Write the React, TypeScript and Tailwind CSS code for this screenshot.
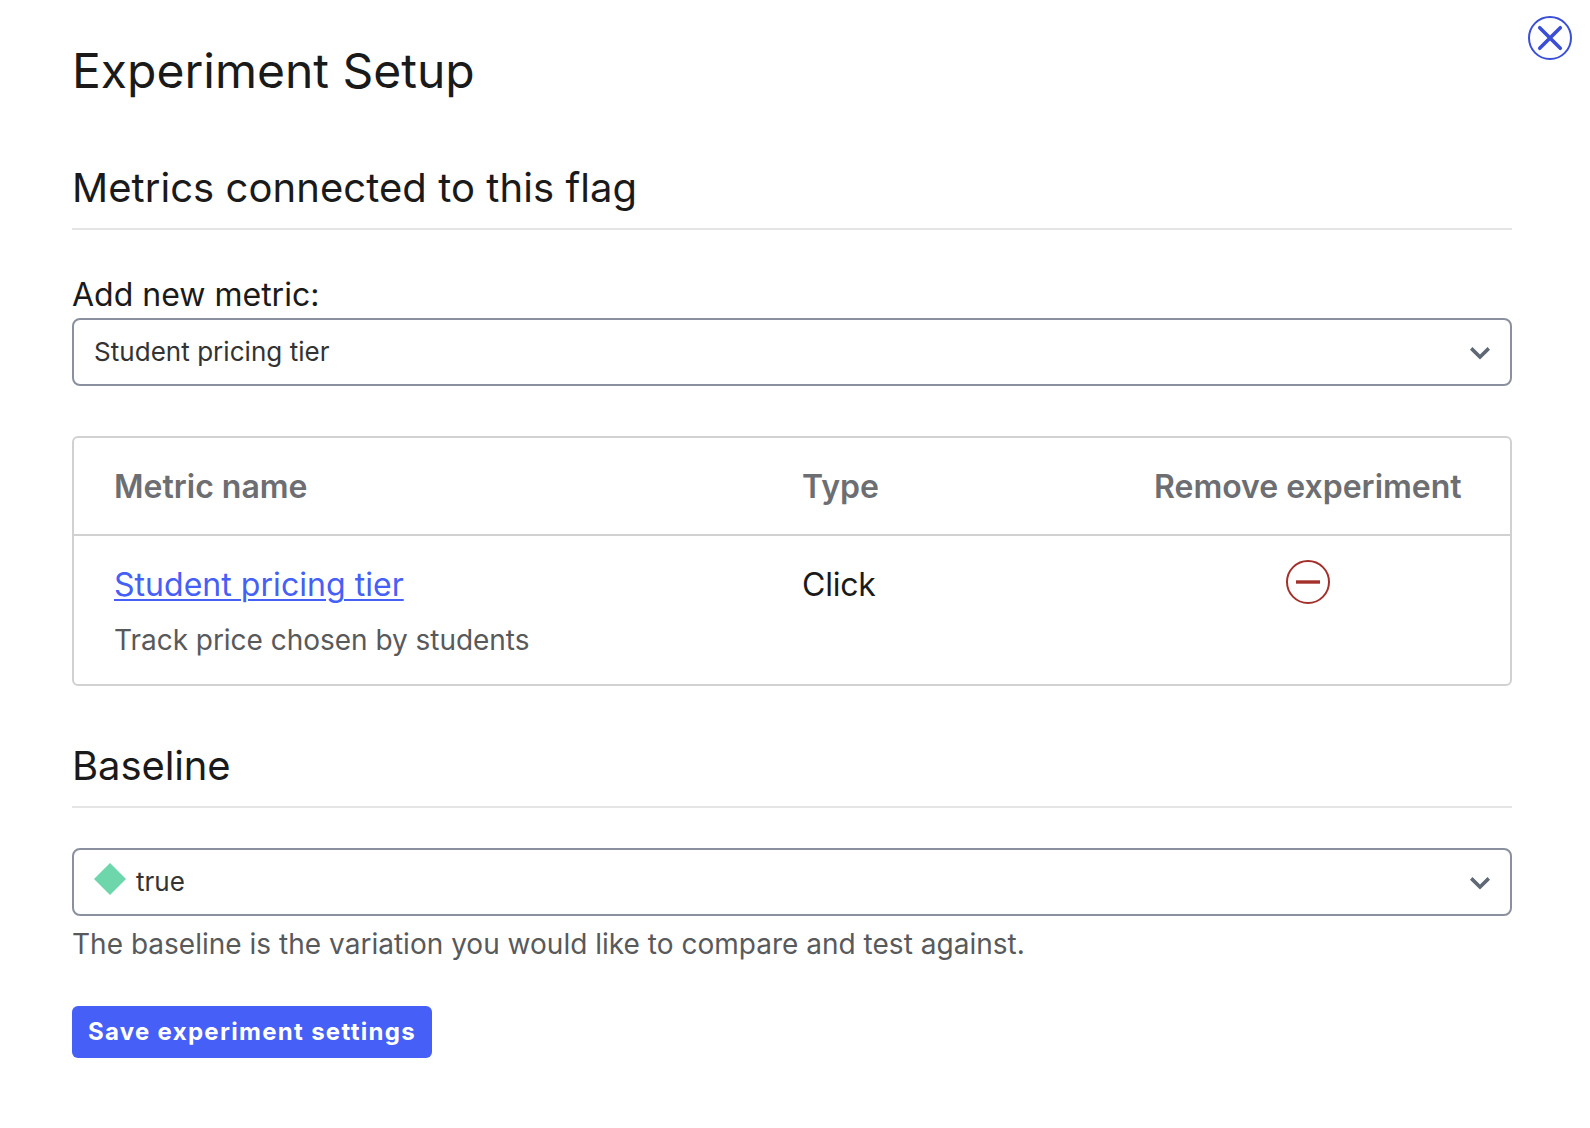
import React from "react";

function Chevron() {
  return (
    <svg className="mt-[2px]" width="20" height="14" viewBox="0 0 20 14" fill="none" stroke="#5f6875" strokeWidth="3.6">
      <path d="M1.2 2.4 L10 11 L18.8 2.4" />
    </svg>
  );
}

export default function App() {
  return (
    <div className="relative flex h-[1128px] w-[1590px] flex-col bg-white pl-[72px] pr-[78px] font-['Inter',sans-serif] text-[#1a1a1a]">
      <button aria-label="Close" className="absolute left-[1528px] top-[16px]">
        <svg width="44" height="44" viewBox="0 0 44 44" fill="none" stroke="#3a4fd6">
          <circle cx="22" cy="22" r="21" strokeWidth="2" />
          <path d="M11.7 11.7 L32.3 32.3 M32.3 11.7 L11.7 32.3" strokeWidth="3.6" strokeLinecap="round" />
        </svg>
      </button>
      <h1 className="mt-[41px] h-[60px] whitespace-nowrap text-[48px] leading-[60px]">Experiment Setup</h1>
      <h2 className="mt-[62px] h-[67px] whitespace-nowrap border-b-2 border-[#e5e5e5] text-[40px] leading-[50px] tracking-[0.06px]">Metrics connected to this flag</h2>
      <p className="mt-[45px] h-[43px] whitespace-nowrap text-[32px] leading-[40px]">Add new metric:</p>
      <div className="flex h-[68px] shrink-0 items-center justify-between rounded-[8px] border-2 border-[#8b909e] px-[20px] text-[26px] tracking-[0.04px] text-[#333]">
        <span className="-mt-[2px]">Student pricing tier</span>
        <Chevron />
      </div>
      <div className="mt-[50px] h-[250px] shrink-0 rounded-[6px] border-2 border-[#d1d1d1]">
        <div className="grid h-[98px] grid-cols-[688px_352px_1fr] items-center border-b-2 border-[#d1d1d1] pl-[40px] pt-[2px] text-[32px] font-semibold leading-[48px] text-[#6d6e71]">
          <span>Metric name</span>
          <span>Type</span>
          <span>Remove experiment</span>
        </div>
        <div className="grid grid-cols-[688px_484px_1fr] pl-[40px] text-[32px]">
          <div>
            <a className="mt-[29px] block leading-[40px] tracking-[0.04px] text-[#455ff7]"><span className="underline decoration-2 underline-offset-[3px]">Student pricing tier</span></a>
            <p className="mt-[15px] text-[28px] leading-[40px] tracking-[-0.03px] text-[#58595b]">Track price chosen by students</p>
          </div>
          <span className="mt-[29px] leading-[40px] tracking-[-0.2px]">Click</span>
          <svg className="mt-[24px]" width="44" height="44" viewBox="0 0 44 44" fill="none" stroke="#a3302b">
            <circle cx="22" cy="22" r="21" strokeWidth="2" />
            <path d="M10 22 H34" strokeWidth="3.4" />
          </svg>
        </div>
      </div>
      <h2 className="mt-[55px] h-[67px] border-b-2 border-[#e5e5e5] text-[40px] leading-[50px] tracking-[-0.1px]">Baseline</h2>
      <div className="mt-[40px] flex h-[68px] shrink-0 items-center rounded-[8px] border-2 border-[#8b909e] px-[20px] text-[26px] text-[#333]">
        <svg className="-mt-[6px] mr-[10px]" width="32" height="32" viewBox="0 0 32 32" fill="#6dd6ab"><path d="M16 0 L32 16 L16 32 L0 16Z" /></svg>
        <span className="-mt-[2px] grow">true</span>
        <Chevron />
      </div>
      <p className="mt-[8px] text-[28px] leading-[40px] tracking-[0.015px] text-[#58595b]">The baseline is the variation you would like to compare and test against.</p>
      <button className="mt-[42px] h-[52px] w-[360px] whitespace-nowrap rounded-[6px] bg-[#455ff7] text-[24px] font-bold tracking-[1.3px] text-white">Save experiment settings</button>
    </div>
  );
}
